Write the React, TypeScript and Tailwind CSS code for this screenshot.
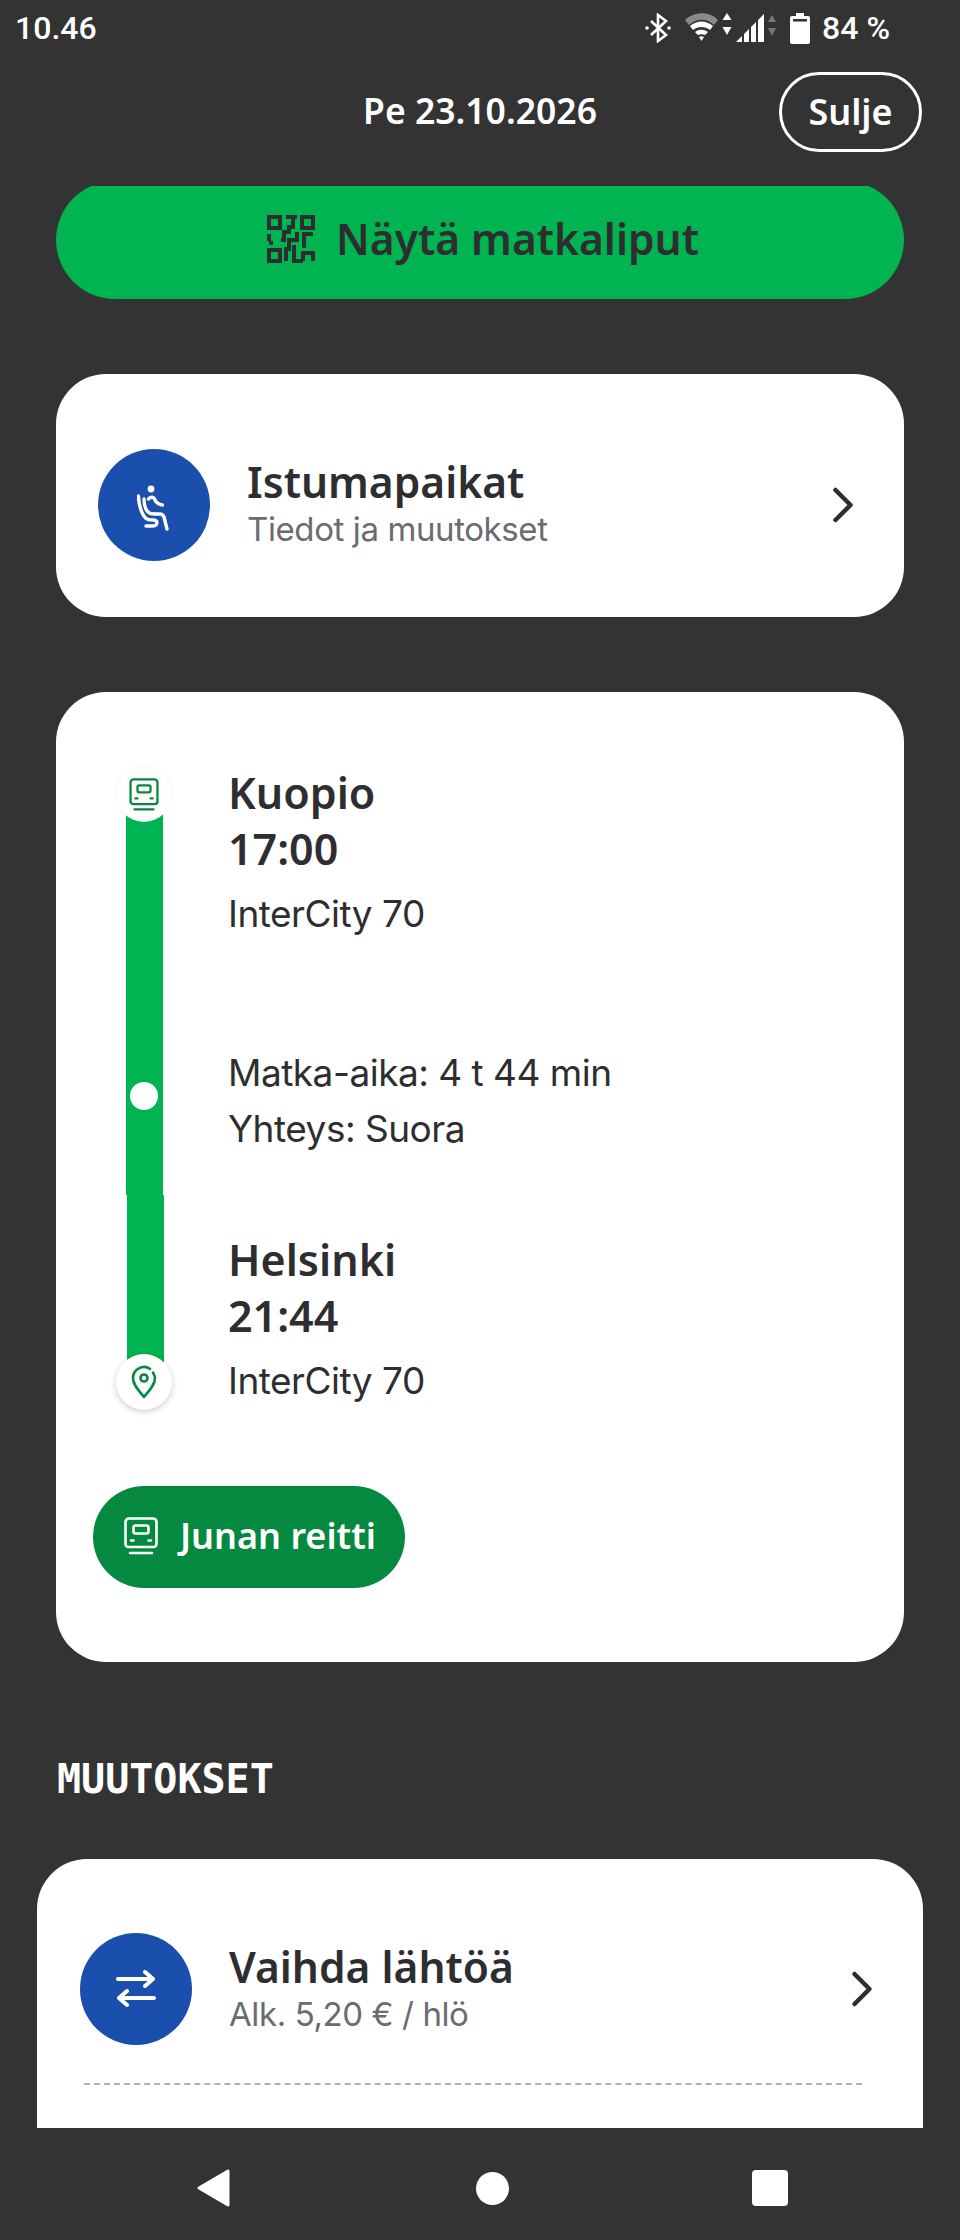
import { ChevronRight } from "lucide-react";

const heading = "font-['Noto_Sans',sans-serif]";
const body = "font-['Inter',sans-serif]";

function TrainIcon({ className }: { className: string }) {
  return (
    <svg viewBox="0 0 34 38" fill="none" stroke="currentColor" strokeWidth="2.6" className={className}>
      <path d="M5 1.5h24a3.5 3.5 0 0 1 3.5 3.5v22a3 3 0 0 1-3 3h-25a3 3 0 0 1-3-3V5A3.5 3.5 0 0 1 5 1.5Z" />
      <rect x="9.5" y="8.5" width="15" height="8" rx="2" />
      <path d="M7 23.5h2.5M24.5 23.5H27M6 36h22" strokeLinecap="round" />
    </svg>
  );
}

function PinIcon() {
  return (
    <svg viewBox="0 0 26 34" fill="none" stroke="#05883f" strokeWidth="2.6" className="h-[34px] w-[26px]">
      <path d="M13 32C8 26 2 20 2 13A11 11 0 0 1 19 3.8M22 7.5c.7 1.700 2 3.500 2 5.500 0 7-6 13-11 19" strokeLinecap="round" />
      <circle cx="13" cy="13" r="3.500" />
    </svg>
  );
}

function QrIcon() {
  return (
    <svg viewBox="0 0 48 48" fill="none" stroke="#2e2e30" strokeWidth="4" className="h-[48px] w-[48px]">
      <rect x="2" y="2" width="11" height="11" />
      <rect x="35" y="2" width="11" height="11" />
      <rect x="2" y="35" width="11" height="11" />
      <path d="M19 2h11M26 2v10h-4v5h-5v8h-3M2 19v7M2 28h4M46 19H37v14M30 17v8h-8v9h-3v12M27 30v16h9M36 46v-8h10v8" />
    </svg>
  );
}

function SeatIcon() {
  return (
    <svg viewBox="0 0 34 48" fill="none" stroke="#fff" strokeWidth="3.4" strokeLinecap="round" strokeLinejoin="round" className="mt-[6px] h-[48px] w-[34px]">
      <circle cx="14" cy="5" r="3.4" fill="#fff" stroke="none" />
      <path d="M1.500 12c0 8 3 18 7 22 2 2 5 2 8 2 3 0 4 2 3 4-.5 1.500-2 2-4 2H9" />
      <path d="M7 15c0 6 1 10 4 13 2 2 4 2 7 2h5c2 0 3 1 4 3l3 12" />
      <path d="M11.500 15c2-2 5-2.500 6 0 1 3 3 5 8 6" />
    </svg>
  );
}

function SwapIcon() {
  return (
    <svg viewBox="0 0 40 38" fill="none" stroke="#fff" strokeWidth="4" strokeLinecap="round" strokeLinejoin="round" className="h-[38px] w-[40px]">
      <path d="M2 9h35M29 2l8 7-8 7M38 28H3M11 21l-8 7 8 7" />
    </svg>
  );
}

function StatusIcons() {
  return (
    <div className="flex items-center">
      <svg viewBox="0 0 26 30" fill="none" stroke="#fff" strokeWidth="2.600" className="h-[30px] w-[26px]">
        <path d="M6 8l15 14-8 6V2l8 6L6 22" />
        <circle cx="2" cy="15" r="1.800" fill="#fff" stroke="none" />
        <circle cx="24" cy="15" r="1.800" fill="#fff" stroke="none" />
      </svg>
      <svg viewBox="0 0 48 32" className="ml-[14px] h-[32px] w-[48px]">
        <path d="M0 8C9-1 25-1 33 8l-4 5C22 6 12 6 4 13Z" fill="#8a8a8a" />
        <path d="M5 14c7-6 16-6 23 0l-3 4c-5-4-12-4-17 0Z M10 20c4-3 9-3 13 0l-3 3c-2-1-5-1-7 0Z M14 25c2-1 3-1 5 0l-2.500 4Z" fill="#fff" />
        <path d="M42 1l4.500 7h-9ZM42 23l4.500-8h-9Z" fill="#fff" />
      </svg>
      <svg viewBox="0 0 42 32" className="ml-[3px] h-[32px] w-[42px]">
        <path d="M0 30 6 24v6ZM8 22l5-5v13H8ZM15 15l5-5v20h-5ZM22 8l6-6v28h-6Z" fill="#fff" />
        <path d="M36 3l4 7h-8ZM36 24l4-8h-8Z" fill="#777" />
      </svg>
      <svg viewBox="0 0 20 32" className="ml-[12px] h-[32px] w-[20px]">
        <path d="M6 1h8v3h4a2 2 0 0 1 2 2v24a2 2 0 0 1-2 2H2a2 2 0 0 1-2-2V6a2 2 0 0 1 2-2h4Z" fill="#fff" />
        <rect x="3" y="7" width="14" height="2.500" fill="#333" />
      </svg>
      <span className="ml-[12px] font-['Roboto',sans-serif] text-[32px] leading-none font-medium text-white">84 %</span>
    </div>
  );
}

function ActionRow({ icon, title, subtitle }: { icon: React.ReactNode; title: string; subtitle: string }) {
  return (
    <div className="flex w-full items-center">
      <div className="flex h-[112px] w-[112px] shrink-0 items-center justify-center rounded-full bg-[#1b4fae]">{icon}</div>
      <div className="mt-[-3px] ml-[37px] flex-1">
        <p className={`${heading} text-[42.5px] leading-[52px] font-semibold text-[#2e2e30]`}>{title}</p>
        <p className={`${body} text-[33px] leading-[42px] tracking-[-0.4px] text-[#6b6b70]`}>{subtitle}</p>
      </div>
      <ChevronRight className="h-[60px] w-[60px] text-[#2e2e30]" strokeWidth={1.8} />
    </div>
  );
}

function Stop({ name, time }: { name: string; time: string }) {
  return (
    <div>
      <p className={`${heading} text-[43px] leading-[56px] font-semibold text-[#2e2e30]`}>{name}</p>
      <p className={`${heading} text-[43px] leading-[56px] font-semibold text-[#2e2e30]`}>{time}</p>
      <p className={`${body} mt-[9px] text-[37px] leading-[56px] tracking-[-0.5px] text-[#2e2e30]`}>InterCity 70</p>
    </div>
  );
}

export default function App() {
  return (
    <div className="flex h-[2240px] w-[960px] flex-col overflow-hidden bg-[#333333]">
      <div className="flex h-[56px] shrink-0 items-center justify-between pr-[70px] pl-[15px]">
        <span className="font-['Roboto',sans-serif] text-[32px] leading-none font-medium text-white">10.46</span>
        <StatusIcons />
      </div>

      <div className="relative flex h-[130px] shrink-0 items-center justify-center pb-[20px]">
        <span className={`${heading} text-[35.5px] font-semibold text-white`}>Pe 23.10.2026</span>
        <button className={`${heading} absolute top-[16px] left-[779px] h-[80px] w-[143px] rounded-full border-[3px] border-white text-[36px] font-semibold text-white`}>
          Sulje
        </button>
      </div>

      <div className="flex-1 overflow-hidden px-[56px]">
        <div className="mt-[-5px] flex h-[118px] items-center justify-center gap-[21px] rounded-full bg-[#00b451] pb-[2px] pl-[6px]">
          <QrIcon />
          <span className={`${heading} text-[42.5px] font-semibold text-[#2e2e30]`}>Näytä matkaliput</span>
        </div>

        <div className="mt-[75px] flex h-[243px] items-center rounded-[50px] bg-white pt-[18px] pr-[31px] pl-[42px]">
          <ActionRow icon={<SeatIcon />} title="Istumapaikat" subtitle="Tiedot ja muutokset" />
        </div>

        <div className="mt-[75px] h-[970px] rounded-[50px] bg-white pt-[73px] pl-[37px]">
          <div className="flex">
            <div className="relative ml-[18px] w-[56px] shrink-0">
              <div className="absolute top-[9px] left-[15px] h-[421px] w-[37px] bg-[#00b451]" />
              <div className="absolute top-[430px] left-[16px] h-[167px] w-[37px] bg-[#00b451]" />
              <div className="absolute top-[1px] left-[5px] flex h-[56px] w-[56px] items-center justify-center rounded-full bg-white text-[#05883f] shadow-[0_0_3px_rgba(0,0,0,0.08)]">
                <TrainIcon className="h-[33px] w-[30px]" />
              </div>
              <div className="absolute top-[317px] left-[19px] h-[28px] w-[28px] rounded-full bg-white" />
              <div className="absolute top-[589px] left-[5px] flex h-[56px] w-[56px] items-center justify-center rounded-full bg-white shadow-[0_2px_6px_rgba(0,0,0,0.2)]">
                <PinIcon />
              </div>
            </div>
            <div className="ml-[61px]">
              <Stop name="Kuopio" time="17:00" />
              <p className={`${body} mt-[102px] text-[37px] leading-[57px] tracking-[-0.5px] text-[#2e2e30]`}>Matka-aika: 4 t 44 min</p>
              <p className={`${body} text-[37px] leading-[56px] tracking-[-0.5px] text-[#2e2e30]`}>Yhteys: Suora</p>
              <div className="mt-[75px]">
                <Stop name="Helsinki" time="21:44" />
              </div>
            </div>
          </div>
          <div className="mt-[77px] flex h-[102px] w-[312px] items-center rounded-full bg-[#05883f] pb-[2px] pl-[31px] text-white">
            <TrainIcon className="h-[38px] w-[34px]" />
            <span className={`${heading} ml-[22px] text-[36px] font-semibold`}>Junan reitti</span>
          </div>
        </div>

        <h2 className="mt-[93px] ml-[1px] font-['DejaVu_Sans_Mono',monospace] text-[40px] leading-[48px] font-bold text-white">MUUTOKSET</h2>

        <div className="mx-[-19px] mt-[56px] h-[300px] rounded-t-[50px] bg-white pt-[74px] pr-[31px] pl-[43px]">
          <ActionRow icon={<SwapIcon />} title="Vaihda lähtöä" subtitle="Alk. 5,20 € / hlö" />
          <div className="mt-[38px] mr-[30px] ml-[4px] border-t-2 border-dashed border-[#b0b0b0]" />
        </div>
      </div>

      <div className="flex h-[112px] shrink-0 items-center justify-between pt-[8px] pr-[172px] pl-[197px]">
        <svg viewBox="0 0 33 38" className="h-[38px] w-[33px]">
          <path d="M31 2 2 19l29 17Z" fill="#fff" stroke="#fff" strokeWidth="3" strokeLinejoin="round" />
        </svg>
        <div className="ml-[3px] h-[33px] w-[33px] rounded-full bg-white" />
        <div className="h-[36px] w-[36px] rounded-[4px] bg-white" />
      </div>
    </div>
  );
}
